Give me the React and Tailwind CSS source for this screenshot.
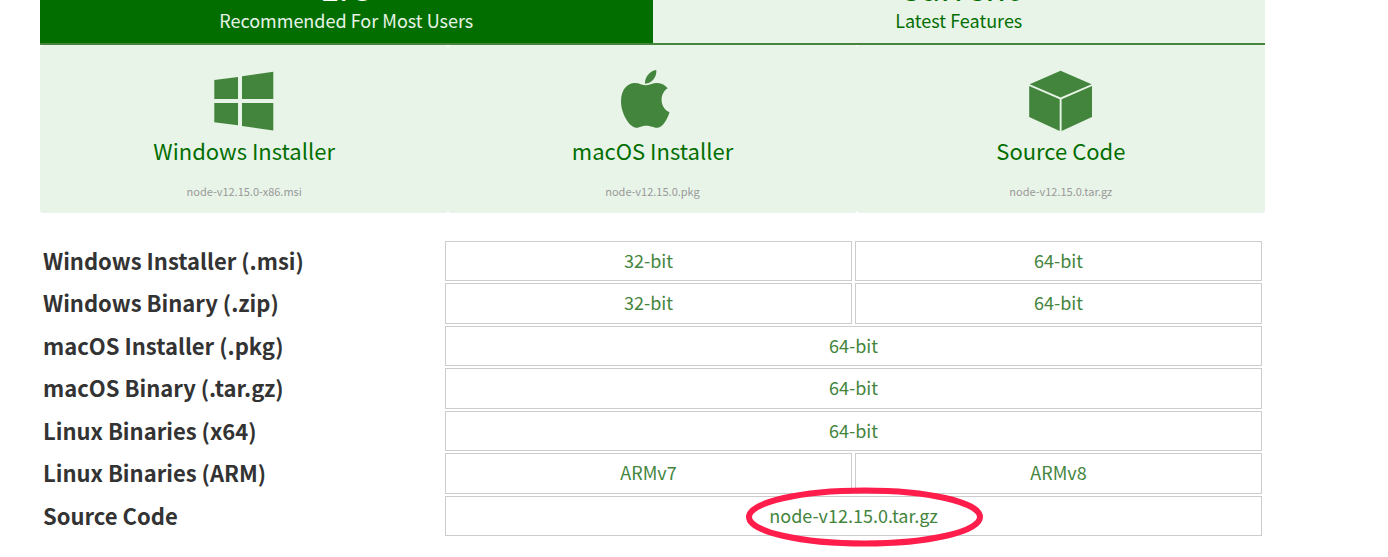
const installers = [
  { title: "Windows Installer", file: "node-v12.15.0-x86.msi", Icon: WindowsIcon },
  { title: "macOS Installer", file: "node-v12.15.0.pkg", Icon: AppleIcon },
  { title: "Source Code", file: "node-v12.15.0.tar.gz", Icon: CubeIcon },
];

const downloads = [
  { label: "Windows Installer (.msi)", links: ["32-bit", "64-bit"] },
  { label: "Windows Binary (.zip)", links: ["32-bit", "64-bit"] },
  { label: "macOS Installer (.pkg)", links: ["64-bit"] },
  { label: "macOS Binary (.tar.gz)", links: ["64-bit"] },
  { label: "Linux Binaries (x64)", links: ["64-bit"] },
  { label: "Linux Binaries (ARM)", links: ["ARMv7", "ARMv8"] },
  { label: "Source Code", links: ["node-v12.15.0.tar.gz"], circled: true },
];

function WindowsIcon() {
  return (
    <svg viewBox="0 0 64 64" className="size-16 fill-[#43853d]" aria-hidden="true">
      <path d="M2.3 12 26 8.9V31H2.3zM30 8.2 61.3 3.8V31H30zM2.3 35H26V57.2L2.3 54.2zM30 35H61.3V62.5L30 57.9z" />
    </svg>
  );
}

function AppleIcon() {
  return (
    <svg viewBox="0 0 64 64" className="size-16 fill-[#43853d]" aria-hidden="true">
      <path d="M36.3 2C36.9 8.6 32.1 15.6 25 15.7C24.5 9.2 29.9 2.8 36.3 2z" />
      <path d="M25.5 17.3C28.5 17.3 32.5 14.9 37.5 14.9C41.7 14.9 45.3 17 47.7 20.3C39.3 25.2 39.4 39.8 49.5 44.3C47.9 49.6 43.1 59.7 37.5 59.7C33.2 59.7 31.1 57.7 26.1 57.7C21.3 57.7 19.9 59.7 16.1 59.7C9.9 59.7 1 46 1 33.5C1 21.4 7.5 15 14.7 15C19.3 15 22.9 17.3 25.5 17.3z" />
    </svg>
  );
}

function CubeIcon() {
  return (
    <svg viewBox="0 0 64 64" className="size-16 fill-[#43853d]" aria-hidden="true">
      <path d="M31.6 2.7 62.6 16.3 31.6 29.5 .6 16.3zM.2 18 30.7 31.2V63L.2 49zM63 18 32.6 31.2V63L63 49z" />
    </svg>
  );
}

export default function App() {
  return (
    <main className="max-w-[1265px] pb-5 pl-10 font-['Noto_Sans_CJK_SC','Noto_Sans',sans-serif]">
      <div className="grid h-[45px] grid-cols-2 grid-rows-1 overflow-hidden border-b-2 border-[#43853d] text-center">
        <a href="#lts" className="flex min-h-0 flex-col justify-end bg-[#026e00] pb-[10px] text-white">
          <span className="text-[34px] leading-10">LTS</span>
          <span className="text-[18px] leading-[26px] text-[#e8f4e8]">Recommended For Most Users</span>
        </a>
        <a href="#current" className="flex min-h-0 flex-col justify-end bg-[#e8f4e8] pb-[10px] text-[#026e00]">
          <span className="text-[34px] leading-10">Current</span>
          <span className="text-[18px] leading-[26px]">Latest Features</span>
        </a>
      </div>

      <ul className="grid grid-cols-3 text-center">
        {installers.map(({ title, file, Icon }) => (
          <li key={title} className="rounded-[3px] bg-[#e8f4e8]">
            <a href={"#" + file} className="flex flex-col items-center pt-[23px] pb-[10px] text-[#026e00]">
              <Icon />
              <span className="text-[22px] leading-9">{title}</span>
              <span className="mt-[11px] text-[11px] leading-6 text-[#999]">{file}</span>
            </a>
          </li>
        ))}
      </ul>

      <table className="mt-[26px] w-full table-fixed border-separate border-spacing-x-[3px] border-spacing-y-[2px]">
        <colgroup>
          <col className="w-[32.9%]" />
          <col />
          <col />
        </colgroup>
        <tbody>
          {downloads.map(({ label, links, circled }) => (
            <tr key={label} className="align-top odd:h-10 even:h-[41px]">
              <th scope="row" className="p-0 pt-px text-left text-[22px] leading-9 font-semibold text-[#333]">
                {label}
              </th>
              {links.map((link) => (
                <td
                  key={link}
                  colSpan={links.length === 1 ? 2 : 1}
                  className="border border-[#ccc] p-0 text-center text-[18px] leading-9 text-[#43853d]"
                >
                  <a href={"#" + link} className="relative inline-block">
                    {link}
                    {circled && (
                      <svg
                        viewBox="0 0 238 60"
                        className="pointer-events-none absolute -top-2.5 -left-6 h-[60px] w-[238px] max-w-none"
                        aria-hidden="true"
                      >
                        <ellipse cx="119.5" cy="30" rx="115.5" ry="26.5" fill="none" stroke="#ff1e4b" strokeWidth="6" />
                      </svg>
                    )}
                  </a>
                </td>
              ))}
            </tr>
          ))}
        </tbody>
      </table>
    </main>
  );
}
